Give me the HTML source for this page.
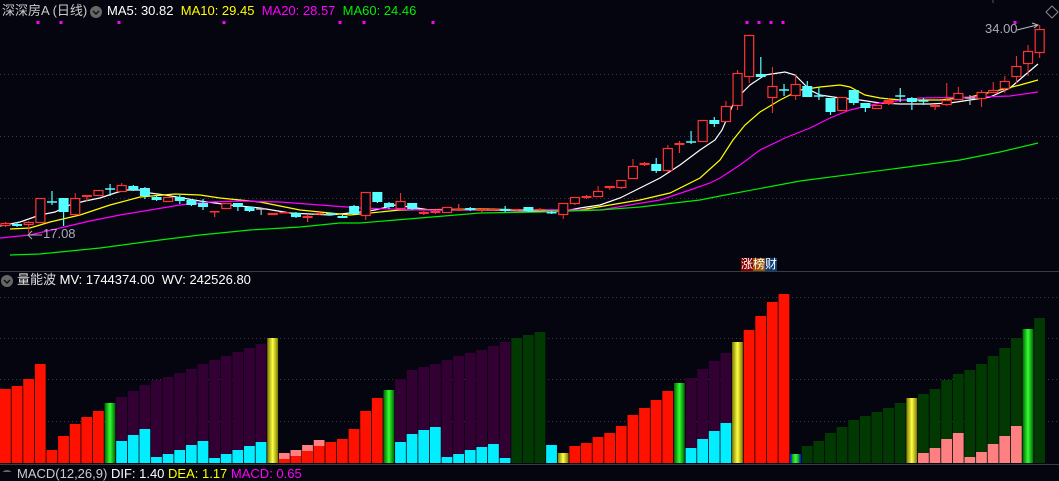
<!DOCTYPE html>
<html><head><meta charset="utf-8">
<style>
html,body{margin:0;padding:0;background:#05050f;overflow:hidden}
#c{position:absolute;left:0;top:0;width:1059px;height:472px}
.t{position:absolute;font-family:"Liberation Sans","Noto Sans CJK SC",sans-serif;font-size:12px;white-space:nowrap;line-height:14px}
</style></head><body>
<svg id="c" width="1059" height="472" xmlns="http://www.w3.org/2000/svg">
<defs>
<linearGradient id="gg" x1="0" x2="1"><stop offset="0" stop-color="#006600"/><stop offset="0.5" stop-color="#33ff33"/><stop offset="1" stop-color="#006600"/></linearGradient>
<linearGradient id="yg" x1="0" x2="1"><stop offset="0" stop-color="#7a7a00"/><stop offset="0.5" stop-color="#ffff44"/><stop offset="1" stop-color="#7a7a00"/></linearGradient>
</defs>
<g stroke="#3a3a44" stroke-dasharray="1,3" stroke-width="1">
<line x1="0" y1="74.5" x2="1059" y2="74.5"/><line x1="0" y1="136.5" x2="1059" y2="136.5"/><line x1="0" y1="198.5" x2="1059" y2="198.5"/>
<line x1="0" y1="297.5" x2="1059" y2="297.5"/><line x1="0" y1="338.5" x2="1059" y2="338.5"/><line x1="0" y1="379.5" x2="1059" y2="379.5"/><line x1="0" y1="421.5" x2="1059" y2="421.5"/>
</g>
<line x1="0" y1="271.5" x2="1059" y2="271.5" stroke="#3c3c3c"/>
<line x1="0" y1="464.5" x2="1059" y2="464.5" stroke="#3c3c3c"/>
<g id="bars"></g>
<g id="lines" fill="none" stroke-width="1.2"></g>
<g id="cand"></g>
<g fill="#ff00ff" id="dots"></g>
<path d="M1052 6 L1058 12 L1052 18 L1046 12 Z" fill="none" stroke="#888" stroke-width="1"/>
<line x1="993" y1="0" x2="993" y2="3" stroke="#555"/>
<path d="M1017 30 L1037 25 M1032 23 L1038 25 L1034 28" stroke="#bbb" fill="none" stroke-width="1"/>
<path d="M28 235 L42 235 M32 231 L28 235 L32 239" stroke="#aaa" fill="none"/>
<rect x="741" y="258" width="12" height="13" fill="#8a0000"/>
<rect x="753" y="258" width="12" height="13" fill="#9a5200"/>
<rect x="765" y="258" width="12" height="13" fill="#0c3c78"/>
<circle cx="96" cy="12" r="6" fill="#666"/><path d="M93 11 L96 14 L99 11" stroke="#111" fill="none" stroke-width="1.5"/>
<circle cx="7" cy="281" r="6" fill="#666"/><path d="M4 280 L7 283 L10 280" stroke="#111" fill="none" stroke-width="1.5"/>
<circle cx="7" cy="476" r="6" fill="#666"/>
</svg>
<div class="t" style="left:2px;top:4px;color:#ccc;font-size:13px">深深房A (日线)</div>
<div class="t" style="left:107px;top:4px;font-size:13px"><span style="color:#fff">MA5: 30.82</span>&nbsp; <span style="color:#ffff00">MA10: 29.45</span>&nbsp; <span style="color:#ff00ff">MA20: 28.57</span>&nbsp; <span style="color:#00ee00">MA60: 24.46</span></div>
<div class="t" style="left:17px;top:273px;color:#ddd;font-size:13px">量能波 <span style="color:#fff">MV: 1744374.00&nbsp; WV: 242526.80</span></div>
<div class="t" style="left:43px;top:227px;color:#aab;font-size:13px">17.08</div>
<div class="t" style="left:985px;top:22px;color:#aab;font-size:13px">34.00</div>
<div class="t" style="left:741px;top:257px;color:#fff;font-size:12px;letter-spacing:0px">涨榜财</div>
<div class="t" style="left:17px;top:467px;font-size:13px"><span style="color:#ccc">MACD(12,26,9)</span> <span style="color:#fff">DIF: 1.40</span> <span style="color:#ffff00">DEA: 1.17</span> <span style="color:#ff00ff">MACD: 0.65</span></div>
<script>
var NS="http://www.w3.org/2000/svg";
function el(p,t,a){var e=document.createElementNS(NS,t);for(var k in a)e.setAttribute(k,a[k]);p.appendChild(e);return e;}
var B="R389 R386 R379 R364 R450 R436 R424 R417 R411 G403 P397C441 P391C435 P385C429 P380C457 P377C454 P373C450 P369C445 P364C441 P360C458 P356C454 P352C450 P348C446 P344C442 Y338 K453R459 K450R456 K445R451 K440R446 R442 R439 R429 R411 R398 G390 P379C442 P370C434 P367C430 P364C427 P360C457 P356C454 P353C450 P350C447 P346C444 P342C458 D338 D335 D332 C445 Y453 R446 R443 R437 R433 R426 R415 R408 R400 R391 G383 P378C448 P369C439 P361C431 P353C423 Y342 R330 R316 R302 R294 B454 D446 D441 D433 D427 D420 D416 D412 D408 D403 Y398 D394K453 D389K448 D380K439 D374K433 D370K457 D364K452 D356K444 D348K436 D338K426 G329 D318".split(" ");
var col={R:"#ff1100",P:"#330033",C:"#00eeff",D:"#023802",K:"#ff8080",G:"url(#gg)",Y:"url(#yg)",B:"url(#gg)"};
var bg=document.getElementById("bars"),base=463;
B.forEach(function(s,i){var x=i*11.62,w=10.8;var m=s.match(/[A-Z]\d+/g);
m.forEach(function(p){var c=p[0],y=+p.slice(1);
el(bg,"rect",{x:x,y:y,width:w,height:base-y,fill:col[c]});
if(c=="B"){el(bg,"rect",{x:x,y:y,width:1.5,height:base-y,fill:"#0022ff"});el(bg,"rect",{x:x+w-1.5,y:y,width:1.5,height:base-y,fill:"#0022ff"});}
});});
var C=[["r",223,226,222,227],["c",224,226,222,227],["r",222,225,221,233],["r",198,223,198,223],["x",202,202,191,205],["c",198,212,198,226],["r",198,215,193,215],["f",195,197,195,201],["r",190,196,190,196],["x",189,189,184,196],["r",185,192,183,192],["c",186,190,185,191],["c",188,196,187,199],["c",197,200,196,201],["r",197,202,197,202],["c",197,201,195,204],["c",200,205,199,206],["c",203,207,199,210],["f",211,212,211,217],["r",203,209,203,209],["c",203,207,203,211],["c",207,211,207,212],["w",209,209,209,215],["r",213,215,213,215],["f",212,213,212,213],["c",213,217,212,218],["f",216,218,214,222],["f",213,214,212,215],["c",213,215,213,215],["c",216,218,215,218],["c",206,214,205,214],
["r",192,216,192,220],["c",192,202,192,203],["c",203,207,202,209],["r",201,209,193,209],["c",203,209,203,210],["f",212,214,211,215],["f",211,213,210,214],["r",207,213,207,213],["f",209,210,204,211],["c",208,210,207,211],["f",209,211,208,212],["f",209,210,208,211],["c",209,211,206,212],["f",209,210,209,211],["c",207,211,207,212],["f",209,210,208,211],["c",212,213,211,214],["r",203,215,203,219],["r",197,204,197,205],["f",196,198,195,199],["r",191,197,186,197],["r",186,188,186,190],["r",180,188,180,189],["r",166,179,159,179],["r",163,165,162,166],["c",164,171,158,173],["r",148,171,145,172],["f",143,145,141,153],["x",142,142,131,144],["r",120,142,120,142],["c",120,124,117,127],["r",106,122,101,122],["r",73,106,70,110],["r",35,77,35,83],["c",74,77,57,77],["r",86,98,67,113],["x",90,90,84,96],["r",84,96,75,100],["c",86,97,81,97],["x",96,96,87,100],["c",98,112,98,115],["r",97,111,97,111],["c",90,103,90,105],["c",103,108,103,112],["r",105,109,105,109],["f",100,104,98,105],["x",96,96,88,102],["c",98,102,97,110],["x",101,101,98,105],["f",105,107,104,110],["r",100,105,83,106],["r",93,100,87,100],["w",98,98,95,105],["r",92,99,90,107],["r",90,93,82,93],["r",81,89,76,93],["r",66,77,56,83],["r",51,64,45,76],["r",29,53,25,58]];
var cg=document.getElementById("cand");
C.forEach(function(d,i){var cx=i*11.62+5.5,t=d[0],col=(t=="r"||t=="f")?"#ff3333":(t=="w"?"#bbbbbb":"#55ffff");
var top=d[1],bot=d[2];if(bot-top<1.5)bot=top+1.5;
if(t=="r"){el(cg,"line",{x1:cx,y1:d[3],x2:cx,y2:top,stroke:col});el(cg,"line",{x1:cx,y1:bot,x2:cx,y2:d[4],stroke:col});el(cg,"rect",{x:cx-4.5,y:top+0.5,width:9,height:bot-top-1,fill:"#05050f",stroke:col,"stroke-width":1.2});}
else if(t=="x"||t=="w"){el(cg,"line",{x1:cx,y1:d[3],x2:cx,y2:d[4],stroke:col,"stroke-width":1.2});el(cg,"line",{x1:cx-5,y1:top,x2:cx+5,y2:top,stroke:col,"stroke-width":1.5});}
else{el(cg,"line",{x1:cx,y1:d[3],x2:cx,y2:d[4],stroke:col,"stroke-width":1.2});el(cg,"rect",{x:cx-5,y:top,width:10,height:bot-top,fill:col});}
});
var L={
"#ffffff":[[0,226],[20,222],[40,215],[55,212],[70,205],[85,201],[100,198],[115,193],[125,190],[140,190],[150,193],[165,195],[200,201],[230,205],[260,208],[290,213],[330,215],[360,212],[375,210],[395,205],[410,207],[430,210],[480,210],[540,211],[565,211],[580,208],[600,205],[620,198],[640,188],[660,178],[680,165],[700,150],[715,140],[722,130],[735,100],[750,85],[765,75],[785,72],[795,75],[810,90],[820,95],[840,98],[860,100],[880,103],[900,104],[930,104],[950,103],[970,100],[990,97],[1010,88],[1025,75],[1038,64]],
"#ffff00":[[10,229],[30,228],[50,222],[80,215],[110,205],[140,197],[175,194],[200,195],[220,198],[260,202],[300,210],[330,213],[350,215],[360,214],[400,210],[480,209],[540,210],[580,210],[610,205],[640,200],[670,193],[700,178],[720,160],[733,140],[745,125],[760,112],[780,100],[800,90],[820,87],[840,85],[850,87],[865,95],[880,98],[900,100],[940,100],[970,97],[1000,90],[1020,85],[1038,80]],
"#ff00ff":[[0,238],[30,235],[60,228],[90,221],[120,215],[150,210],[180,205],[210,202],[240,201],[280,202],[320,205],[360,208],[420,210],[570,210],[600,210],[630,205],[660,200],[690,190],[710,183],[720,178],[740,165],[760,150],[785,138],[810,128],[830,118],[850,110],[880,103],[920,98],[980,97],[1010,96],[1038,92]],
"#00ee00":[[10,255],[40,254],[100,248],[160,240],[200,235],[250,230],[300,227],[340,223],[360,223],[420,218],[480,213],[540,212],[600,210],[640,207],[700,200],[720,196],[800,181],[900,168],[960,160],[1000,152],[1038,143]]};
var lg=document.getElementById("lines");
for(var k in L){el(lg,"polyline",{points:L[k].map(function(p){return p.join(",")}).join(" "),stroke:k});}
var dg=document.getElementById("dots");
[38,61,119,224,340,364,433,747,759,771,783,1015].forEach(function(x){el(dg,"rect",{x:x-1.5,y:21,width:3,height:3});});
</script>
</body></html>
